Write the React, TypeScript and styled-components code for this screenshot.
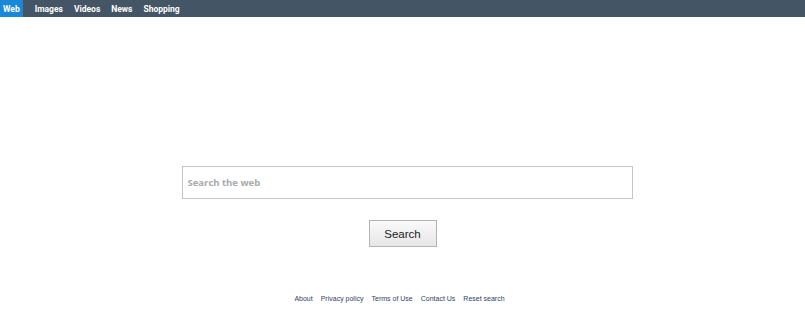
import styled, { createGlobalStyle } from "styled-components";

const GlobalStyle = createGlobalStyle`
  html, body {
    margin: 0;
    padding: 0;
    background: #ffffff;
    font-family: "Liberation Sans", Arial, sans-serif;
  }
`;

const StyledPage = styled.div`
  width: 100%;
  height: 318px;
  display: flex;
  flex-direction: column;
`;

const StyledNavBar = styled.nav`
  height: 17px;
  background: #445566;
  display: flex;
  align-items: stretch;
`;

const StyledNavItem = styled.a<{ $active?: boolean }>`
  display: flex;
  align-items: center;
  padding: 0 ${(p) => (p.$active ? "3px" : "5.5px")};
  margin-right: ${(p) => (p.$active ? "6.5px" : "0")};
  background: ${(p) => (p.$active ? "#1a88d8" : "transparent")};
  color: #ffffff;
  font-family: Roboto, "Liberation Sans", sans-serif;
  font-size: 8.5px;
  font-weight: bold;
  text-decoration: none;
  cursor: pointer;
`;

const StyledMain = styled.main`
  display: flex;
  flex-direction: column;
  align-items: center;
  padding-top: 149px;
`;

const StyledSearchInput = styled.input`
  box-sizing: border-box;
  width: 451px;
  height: 33px;
  margin-left: 9px;
  border: 1px solid #c4c4c4;
  padding: 0 5px;
  font-family: "Open Sans", sans-serif;
  font-size: 9.5px;
  font-weight: bold;
  color: #333;
  outline: none;
  &::placeholder {
    color: #a9a9a9;
  }
`;

const StyledSearchButton = styled.button`
  box-sizing: border-box;
  width: 68px;
  height: 27px;
  margin-top: 21px;
  border: 1px solid #b3b3b3;
  background: linear-gradient(#fafafa, #e6e6e6);
  font-family: "Liberation Sans", Arial, sans-serif;
  font-size: 11.5px;
  color: #222;
  cursor: pointer;
`;

const StyledFooter = styled.footer`
  display: flex;
  justify-content: center;
  gap: 8px;
  margin-top: 48px;
  padding-right: 6px;
`;

const StyledFooterLink = styled.a`
  font-size: 7px;
  color: #2e3f66;
  text-decoration: none;
  cursor: pointer;
`;

const navItems = ["Web", "Images", "Videos", "News", "Shopping"];
const footerLinks = ["About", "Privacy policy", "Terms of Use", "Contact Us", "Reset search"];

export default function App() {
  return (
    <>
      <GlobalStyle />
      <StyledPage>
        <StyledNavBar>
          {navItems.map((item) => (
            <StyledNavItem key={item} $active={item === "Web"}>
              {item}
            </StyledNavItem>
          ))}
        </StyledNavBar>
        <StyledMain>
          <StyledSearchInput type="text" placeholder="Search the web" />
          <StyledSearchButton>Search</StyledSearchButton>
          <StyledFooter>
            {footerLinks.map((link) => (
              <StyledFooterLink key={link}>{link}</StyledFooterLink>
            ))}
          </StyledFooter>
        </StyledMain>
      </StyledPage>
    </>
  );
}
